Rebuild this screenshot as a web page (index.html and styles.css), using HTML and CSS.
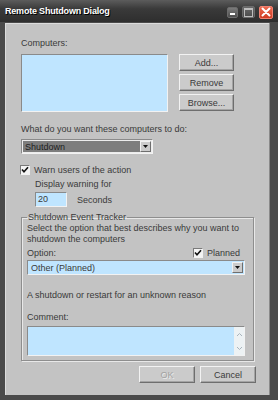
FILE: index.html
```html
<!DOCTYPE html>
<html>
<head>
    <meta charset="UTF-8">
    <title>Remote Shutdown Dialog</title>
    <link rel="stylesheet" href="styles.css">
</head>
<body>
<div class="window">
    <div class="titlebar">
        <span class="title">Remote Shutdown Dialog</span>
        <div class="controls">
            <span class="ctl min"><span class="bar"></span></span>
            <span class="ctl max"><span class="sq"></span></span>
            <span class="ctl close">
                <svg width="10" height="10" viewBox="0 0 10 10"><path d="M1.5 1.5 L8.5 8.5 M8.5 1.5 L1.5 8.5" stroke="#fff" stroke-width="2" stroke-linecap="round"/></svg>
            </span>
        </div>
    </div>
    <div class="frame">
        <div class="client">
            <div class="label">Computers:</div>
            <div class="computers">
                <div class="listbox"></div>
                <div class="side-buttons">
                    <button type="button">Add...</button>
                    <button type="button">Remove</button>
                    <button type="button">Browse...</button>
                </div>
            </div>

            <div class="label question">What do you want these computers to do:</div>
            <div class="combo action">
                <span class="value selected">Shutdown</span>
                <span class="drop"><svg width="5" height="3" viewBox="0 0 5 3"><path d="M0 0 H5 L2.5 3 Z" fill="#111"/></svg></span>
            </div>

            <div class="check warn-check">
                <span class="box"><svg width="8" height="8" viewBox="0 0 8 8"><path d="M1 3.5 L3 5.8 L7 1.2" stroke="#111" stroke-width="1.6" fill="none"/></svg></span>
                Warn users of the action
            </div>
            <div class="warn">
                <div class="label">Display warning for</div>
                <div class="secs">
                    <span class="field">20</span>
                    <span>Seconds</span>
                </div>
            </div>

            <fieldset class="group">
                <legend>Shutdown Event Tracker</legend>
                <div class="text">Select the option that best describes why you want to<br>shutdown the computers</div>
                <div class="option-row">
                    <span>Option:</span>
                    <span class="check">
                        <span class="box"><svg width="8" height="8" viewBox="0 0 8 8"><path d="M1 3.5 L3 5.8 L7 1.2" stroke="#111" stroke-width="1.6" fill="none"/></svg></span>
                        Planned
                    </span>
                </div>
                <div class="combo reason">
                    <span class="value">Other (Planned)</span>
                    <span class="drop"><svg width="5" height="3" viewBox="0 0 5 3"><path d="M0 0 H5 L2.5 3 Z" fill="#111"/></svg></span>
                </div>
                <div class="text desc">A shutdown or restart for an unknown reason</div>
                <div class="text comment-label">Comment:</div>
                <div class="memo">
                    <div class="scroll">
                        <svg width="7" height="5" viewBox="0 0 7 5"><path d="M1 4 L3.5 1.5 L6 4" stroke="#a8b4bc" stroke-width="1" fill="none"/></svg>
                        <svg width="7" height="5" viewBox="0 0 7 5"><path d="M1 1 L3.5 3.5 L6 1" stroke="#a8b4bc" stroke-width="1" fill="none"/></svg>
                    </div>
                </div>
            </fieldset>

            <div class="actions">
                <button type="button" class="disabled">OK</button>
                <button type="button">Cancel</button>
            </div>
        </div>
    </div>
</div>
</body>
</html>
```

FILE: styles.css
```css
body {
    margin: 0;
    font-family: "Liberation Sans", Arial, sans-serif;
    font-size: 9px;
    color: #3a3a3a;
}
.window {
    width: 278px;
    height: 400px;
    display: flex;
    flex-direction: column;
    background-color: #4a4a4a;
}
.titlebar {
    height: 22px;
    display: flex;
    align-items: center;
    justify-content: space-between;
    padding: 0 5px 0 5px;
    background: linear-gradient(#5c5c5c, #3a3a3a 40%, #2e2e2e);
}
.title {
    color: #fff;
    font-weight: bold;
    font-size: 9px;
    letter-spacing: -0.2px;
    text-shadow: 1px 1px 0 #000;
}
.controls {
    display: flex;
    align-items: center;
    gap: 4px;
    padding-top: 2px;
}
.ctl {
    display: flex;
    align-items: center;
    justify-content: center;
    box-sizing: border-box;
    border-radius: 2px;
    border: 1px solid #6c6c6c;
}
.ctl.min {
    width: 11px;
    height: 11px;
    background: linear-gradient(#7a7a7a, #4e4e4e);
    align-items: flex-end;
    padding-bottom: 2px;
}
.ctl.min .bar {
    width: 5px;
    height: 2px;
    background: #fff;
}
.ctl.max {
    width: 13px;
    height: 12px;
    background: linear-gradient(#6a6a6a, #4a4a4a);
}
.ctl.max .sq {
    width: 7px;
    height: 6px;
    border: 1px solid #bdbdbd;
    border-top-width: 2px;
}
.ctl.close {
    width: 14px;
    height: 13px;
    border-color: #f08070;
    background: linear-gradient(#ec6a50, #cf3b22);
}
.frame {
    flex: 1;
    display: flex;
    padding: 1px 9px 5px 5px;
}
.client {
    flex: 1;
    background-color: #c3c3c3;
    padding: 13px 13px 0 15px;
    border-left: 1px solid #dcdcdc;
    border-top: 1px solid #dcdcdc;
    box-shadow: 1px 0 0 #8a8a8a;
}
.label {
    line-height: 12px;
}
.computers {
    display: flex;
    align-items: flex-start;
    gap: 11px;
    margin-top: 5px;
}
.listbox {
    width: 147px;
    height: 58px;
    box-sizing: border-box;
    background-color: #bfe5ff;
    border: 1px solid;
    border-color: #8a8a8a #f2f2f2 #f2f2f2 #8a8a8a;
}
.side-buttons {
    display: flex;
    flex-direction: column;
    gap: 3px;
}
button {
    width: 55px;
    height: 17px;
    padding: 0;
    box-sizing: border-box;
    font-family: "Liberation Sans", Arial, sans-serif;
    font-size: 9px;
    color: #3a3a3a;
    background-color: #cbcbcb;
    border: 1px solid;
    border-color: #f2f2f2 #6e6e6e #6e6e6e #f2f2f2;
    box-shadow: inset -1px -1px 0 #a4a4a4;
}
button.disabled {
    color: #a2a2a2;
    text-shadow: 1px 1px 0 #ececec;
}
.question {
    margin-top: 11px;
}
.combo {
    display: flex;
    align-items: center;
    height: 15px;
    box-sizing: border-box;
    border: 1px solid;
    border-color: #8a8a8a #f2f2f2 #f2f2f2 #8a8a8a;
    padding: 1px;
    margin-top: 4px;
}
.combo .value {
    flex: 1;
    height: 100%;
    display: flex;
    align-items: center;
    padding-left: 2px;
}
.combo.action {
    width: 132px;
    background-color: #ececec;
}
.combo .value.selected {
    background-color: #7d7d7d;
    color: #1e1e1e;
}
.combo.reason {
    width: 218px;
    background-color: #bfe5ff;
    margin-top: 1px;
}
.drop {
    width: 11px;
    height: 11px;
    box-sizing: border-box;
    display: flex;
    align-items: center;
    justify-content: center;
    background-color: #cbcbcb;
    border: 1px solid;
    border-color: #f2f2f2 #6e6e6e #6e6e6e #f2f2f2;
}
.check {
    display: flex;
    align-items: center;
    gap: 4px;
    line-height: 12px;
}
.box {
    width: 10px;
    height: 10px;
    box-sizing: border-box;
    display: flex;
    align-items: center;
    justify-content: center;
    background-color: #f4f4f4;
    border: 1px solid;
    border-color: #7a7a7a #f2f2f2 #f2f2f2 #7a7a7a;
}
.warn-check {
    margin-top: 10px;
    margin-left: -1px;
}
.warn {
    padding-left: 14px;
    margin-top: 2px;
}
.secs {
    display: flex;
    align-items: center;
    gap: 10px;
    margin-top: 2px;
}
.field {
    width: 32px;
    height: 15px;
    box-sizing: border-box;
    background-color: #bfe5ff;
    border: 1px solid;
    border-color: #8a8a8a #f2f2f2 #f2f2f2 #8a8a8a;
    padding-left: 2px;
    line-height: 13px;
}
.group {
    margin: 4px 0 0 0;
    width: 233px;
    height: 150px;
    box-sizing: border-box;
    padding: 0 5px;
    border: 1px solid #8e8e8e;
    box-shadow: 1px 1px 0 #e8e8e8, inset 1px 1px 0 #e8e8e8;
}
.group legend {
    padding: 0 1px;
    line-height: 12px;
    margin-left: 0;
}
.text {
    line-height: 11px;
}
.option-row {
    display: flex;
    justify-content: space-between;
    align-items: center;
    line-height: 12px;
    margin-top: 2px;
    padding-right: 8px;
}
.desc {
    margin-top: 15px;
}
.comment-label {
    margin-top: 11px;
}
.memo {
    width: 218px;
    height: 30px;
    box-sizing: border-box;
    margin-top: 3px;
    display: flex;
    justify-content: flex-end;
    background-color: #bfe5ff;
    border: 1px solid;
    border-color: #8a8a8a #f2f2f2 #f2f2f2 #8a8a8a;
}
.scroll {
    width: 10px;
    display: flex;
    flex-direction: column;
    justify-content: space-around;
    align-items: center;
    background-color: #edf2f4;
}
.actions {
    display: flex;
    justify-content: flex-end;
    gap: 5px;
    margin-top: 5px;
}
.actions button {
    width: 56px;
}
```
